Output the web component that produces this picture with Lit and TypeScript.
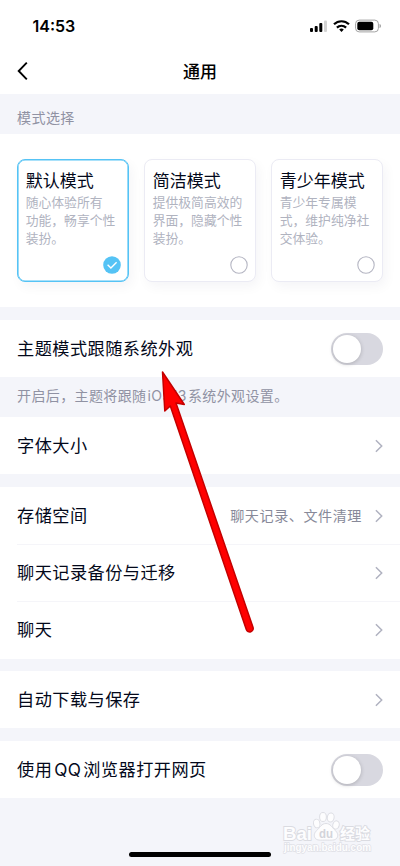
import { LitElement, html, css, svg, nothing } from "lit";
import { customElement, property } from "lit/decorators.js";

@customElement("mode-card")
class ModeCard extends LitElement {
  @property() heading = "";
  @property({ attribute: false }) lines: string[] = [];
  @property({ type: Boolean, reflect: true }) selected = false;

  static styles = css`
    :host {
      display: flex;
      flex-direction: column;
      box-sizing: border-box;
      width: 112px;
      height: 123px;
      padding: 10px 5.6px 6px 7.7px;
      border: 1px solid #ebebf4;
      border-radius: 8px;
      background: #fff;
      box-shadow: 3px 5px 12px rgba(30, 30, 60, 0.045);
    }
    :host([selected]) {
      border-color: #55c3f5;
      box-shadow: inset 0 0 0 0.6px #55c3f5, 3px 5px 12px rgba(30, 30, 60, 0.045);
    }
    .heading {
      font-size: 17px;
      line-height: 22px;
      color: #03081a;
      white-space: nowrap;
    }
    .desc {
      font-size: 12.8px;
      line-height: 18px;
      color: #b0b3bf;
      white-space: nowrap;
      margin-top: 1.5px;
    }
    svg {
      display: block;
      margin: auto 0 0 auto;
    }
  `;

  render() {
    return html`
      <div class="heading">${this.heading}</div>
      <div class="desc">${this.lines.map((l) => html`<div>${l}</div>`)}</div>
      <svg width="20" height="20" viewBox="0 0 20 20" fill="none">
        ${this.selected
          ? svg`<circle cx="10" cy="10" r="8.8" fill="#55c3f5"/>
              <path d="M5.600 9.700l3.300 3.200 5.700-5.700" stroke="#fff" stroke-width="1.400"/>`
          : svg`<circle cx="10" cy="10" r="8.200" stroke="#b4b5c2" stroke-width="1.100"/>`}
      </svg>
    `;
  }
}

@customElement("setting-row")
class SettingRow extends LitElement {
  @property() label = "";
  @property() detail = "";
  @property({ type: Boolean }) toggle = false;

  static styles = css`
    :host {
      display: flex;
      align-items: center;
      box-sizing: border-box;
      height: 57.3px;
      padding: 0.6px 17px 0;
      background: #fff;
    }
    .label {
      flex: 1;
      font-size: 17.2px;
      letter-spacing: 0.45px;
      word-spacing: -3.4px;
      line-height: 24px;
      color: #03081a;
      white-space: nowrap;
    }
    .detail {
      margin-right: 12px;
      font-size: 14.1px;
      letter-spacing: 0.55px;
      line-height: 20px;
      color: #878999;
      white-space: nowrap;
    }
    .switch {
      box-sizing: border-box;
      width: 52px;
      height: 32px;
      padding: 2px;
      border-radius: 16px;
      background: #d8d8e0;
    }
    .knob {
      width: 28px;
      height: 28px;
      border-radius: 50%;
      background: #fff;
      box-shadow: 0 1px 4px rgba(0, 0, 0, 0.2);
    }
  `;

  render() {
    return html`
      <div class="label">${this.label}</div>
      ${this.detail ? html`<div class="detail">${this.detail}</div>` : nothing}
      ${this.toggle
        ? html`<div class="switch"><div class="knob"></div></div>`
        : html`<svg width="9" height="14" viewBox="0 0 9 14" fill="none">
            <path d="M1.900 1.300L7.700 7l-5.800 5.700" stroke="#b0b2c0" stroke-width="1.500" />
          </svg>`}
    `;
  }
}

@customElement("app-root")
class AppRoot extends LitElement {
  static styles = css`
    :host {
      display: block;
      position: relative;
      width: 400px;
      height: 866px;
      overflow: hidden;
      background: #f4f5fa;
      font-family: Inter, "Noto Sans CJK SC", sans-serif;
    }
    .top {
      height: 94px;
      background: #fff;
    }
    .status {
      display: flex;
      align-items: center;
      height: 51px;
      padding: 0 19px 0 32.5px;
      justify-content: space-between;
    }
    .time {
      font: 600 16px/20px Inter, sans-serif;
      color: #000;
    }
    .indicators {
      display: block;
    }
    .nav {
      display: grid;
      grid-template-columns: 60px 1fr 60px;
      align-items: center;
      height: 40px;
    }
    .back {
      margin-left: 16px;
    }
    .title {
      padding-top: 2px;
      text-align: center;
      font-size: 17px;
      font-weight: 500;
      line-height: 24px;
      color: #000;
    }
    .caption {
      box-sizing: border-box;
      height: 40px;
      padding: 4px 17px 0;
      font-size: 14px;
      letter-spacing: 0.45px;
      word-spacing: -3.2px;
      line-height: 40px;
      color: #9092a3;
      white-space: nowrap;
    }
    .note {
      padding-top: 0;
      letter-spacing: 0.38px;
      line-height: 37px;
    }
    .cards {
      display: flex;
      gap: 15px;
      box-sizing: border-box;
      height: 173px;
      padding: 25px 17px 0;
      background: #fff;
      overflow: hidden;
    }
    .group {
      display: flex;
      flex-direction: column;
      margin-bottom: 12.5px;
    }
    .flush {
      margin-bottom: 0;
    }
    .first {
      margin-top: 12.7px;
    }
    .rule {
      height: 1px;
      margin: -0.5px 0 -0.5px 17px;
      background: #f5f5f9;
      z-index: 1;
    }
    .home,
    .arrow,
    .mark {
      position: absolute;
      z-index: 2;
    }
    .home {
      left: 129px;
      bottom: 9px;
      width: 142px;
      height: 5px;
      border-radius: 3px;
      background: #000;
    }
    .arrow {
      left: 150px;
      top: 360px;
    }
    .mark {
      left: 276px;
      top: 808px;
    }
    .mark text {
      font-family: "Liberation Sans", "Noto Sans CJK SC", sans-serif;
      fill: #fdfdfe;
      stroke: #dadbe1;
      stroke-width: 1.8px;
      paint-order: stroke;
      font-weight: 700;
    }
    .mark .du {
      fill: #d3d4da;
      stroke: none;
    }
    .mark .url {
      stroke: #dfe0e6;
      stroke-width: 1.4px;
    }
  `;

  render() {
    return html`
      <div class="top">
        <div class="status">
          <div class="time">14:53</div>
          <svg class="indicators" width="73" height="16" viewBox="0 0 73 16">
            <rect x="2" y="10" width="3" height="4" rx="1" />
            <rect x="6.700" y="8" width="3" height="6" rx="1" />
            <rect x="11.300" y="5" width="3" height="9" rx="1" />
            <rect x="16" y="2.500" width="3" height="11.500" rx="1" fill="#d2d2d2" />
            <g fill="none" stroke="#000" stroke-width="2.200">
              <path d="M26 6.300a10.800 10.800 0 0 1 15 0" />
              <path d="M28.900 9.600a6.600 6.600 0 0 1 9.200 0" />
            </g>
            <path d="M33.500 14l-2.300-2.500a3.500 3.500 0 0 1 4.600 0z" />
            <rect x="47.600" y="2.100" width="22.800" height="11.800" rx="3.600" fill="none" stroke="#a3a3a3" stroke-width="1" />
            <rect x="49.300" y="3.800" width="16" height="8.400" rx="2" />
            <path d="M71.500 6v4c1-.4 1.500-1.200 1.500-2s-.5-1.600-1.500-2z" fill="#a3a3a3" />
          </svg>
        </div>
        <div class="nav">
          <svg class="back" width="14" height="20" viewBox="0 0 14 20" fill="none">
            <path d="M10.800 1.700L2.700 10l8.100 8.300" stroke="#000" stroke-width="1.900" />
          </svg>
          <div class="title">通用</div>
        </div>
      </div>
      <div class="caption">模式选择</div>
      <div class="cards">
        <mode-card selected heading="默认模式" .lines=${["随心体验所有", "功能，畅享个性", "装扮。"]}></mode-card>
        <mode-card heading="简洁模式" .lines=${["提供极简高效的", "界面，隐藏个性", "装扮。"]}></mode-card>
        <mode-card heading="青少年模式" .lines=${["青少年专属模", "式，维护纯净社", "交体验。"]}></mode-card>
      </div>
      <div class="group flush first">
        <setting-row label="主题模式跟随系统外观" toggle></setting-row>
      </div>
      <div class="caption note">开启后，主题将跟随 iOS13 系统外观设置。</div>
      <div class="group"><setting-row label="字体大小"></setting-row></div>
      <div class="group">
        <setting-row label="存储空间" detail="聊天记录、文件清理"></setting-row>
        <div class="rule"></div>
        <setting-row label="聊天记录备份与迁移"></setting-row>
        <div class="rule"></div>
        <setting-row label="聊天"></setting-row>
      </div>
      <div class="group"><setting-row label="自动下载与保存"></setting-row></div>
      <div class="group"><setting-row label="使用 QQ 浏览器打开网页" toggle></setting-row></div>

      <svg class="mark" width="104" height="48" viewBox="0 0 104 48">
        <g fill="#fdfdfe" stroke="#dddee4" stroke-width="1">
          <ellipse cx="40.700" cy="15.500" rx="3.200" ry="4.400" transform="rotate(-12 40.700 15.500)" />
          <ellipse cx="47" cy="9" rx="3.400" ry="4.500" />
          <ellipse cx="54.700" cy="9.500" rx="3.400" ry="4.500" transform="rotate(10 54.700 9.500)" />
          <ellipse cx="60" cy="17" rx="3.200" ry="4.200" transform="rotate(15 60 17)" />
          <path d="M50 15.500c4.500 0 6 4 8.500 6.200 3 2.600 4 5.300 2.600 8-1.800 3.200-6 2.400-11.100 2.400s-9.300.8-11.100-2.400c-1.400-2.700-.4-5.400 2.600-8 2.500-2.200 4-6.200 8.500-6.200z" />
        </g>
        <text x="7" y="31.500" font-size="19" textLength="29" lengthAdjust="spacingAndGlyphs">Bai</text>
        <text class="du" x="43" y="30" font-size="12" textLength="14" lengthAdjust="spacingAndGlyphs">du</text>
        <text x="64" y="31" font-size="15" textLength="30">经验</text>
        <text class="url" x="8" y="43" font-size="10" textLength="87" lengthAdjust="spacingAndGlyphs">jingyan.baidu.com</text>
      </svg>
      <svg class="arrow" width="110" height="280" viewBox="0 0 110 280">
        <path
          d="M12.500 12L34.300 44.500L26 43L103 267.300A3.500 3.500 0 0 1 96.300 269.600L20.300 46L14.800 51Z"
          fill="#f00"
          stroke="#c40000"
          stroke-width="1.500"
          stroke-linejoin="round"
        />
      </svg>
      <div class="home"></div>
    `;
  }
}
